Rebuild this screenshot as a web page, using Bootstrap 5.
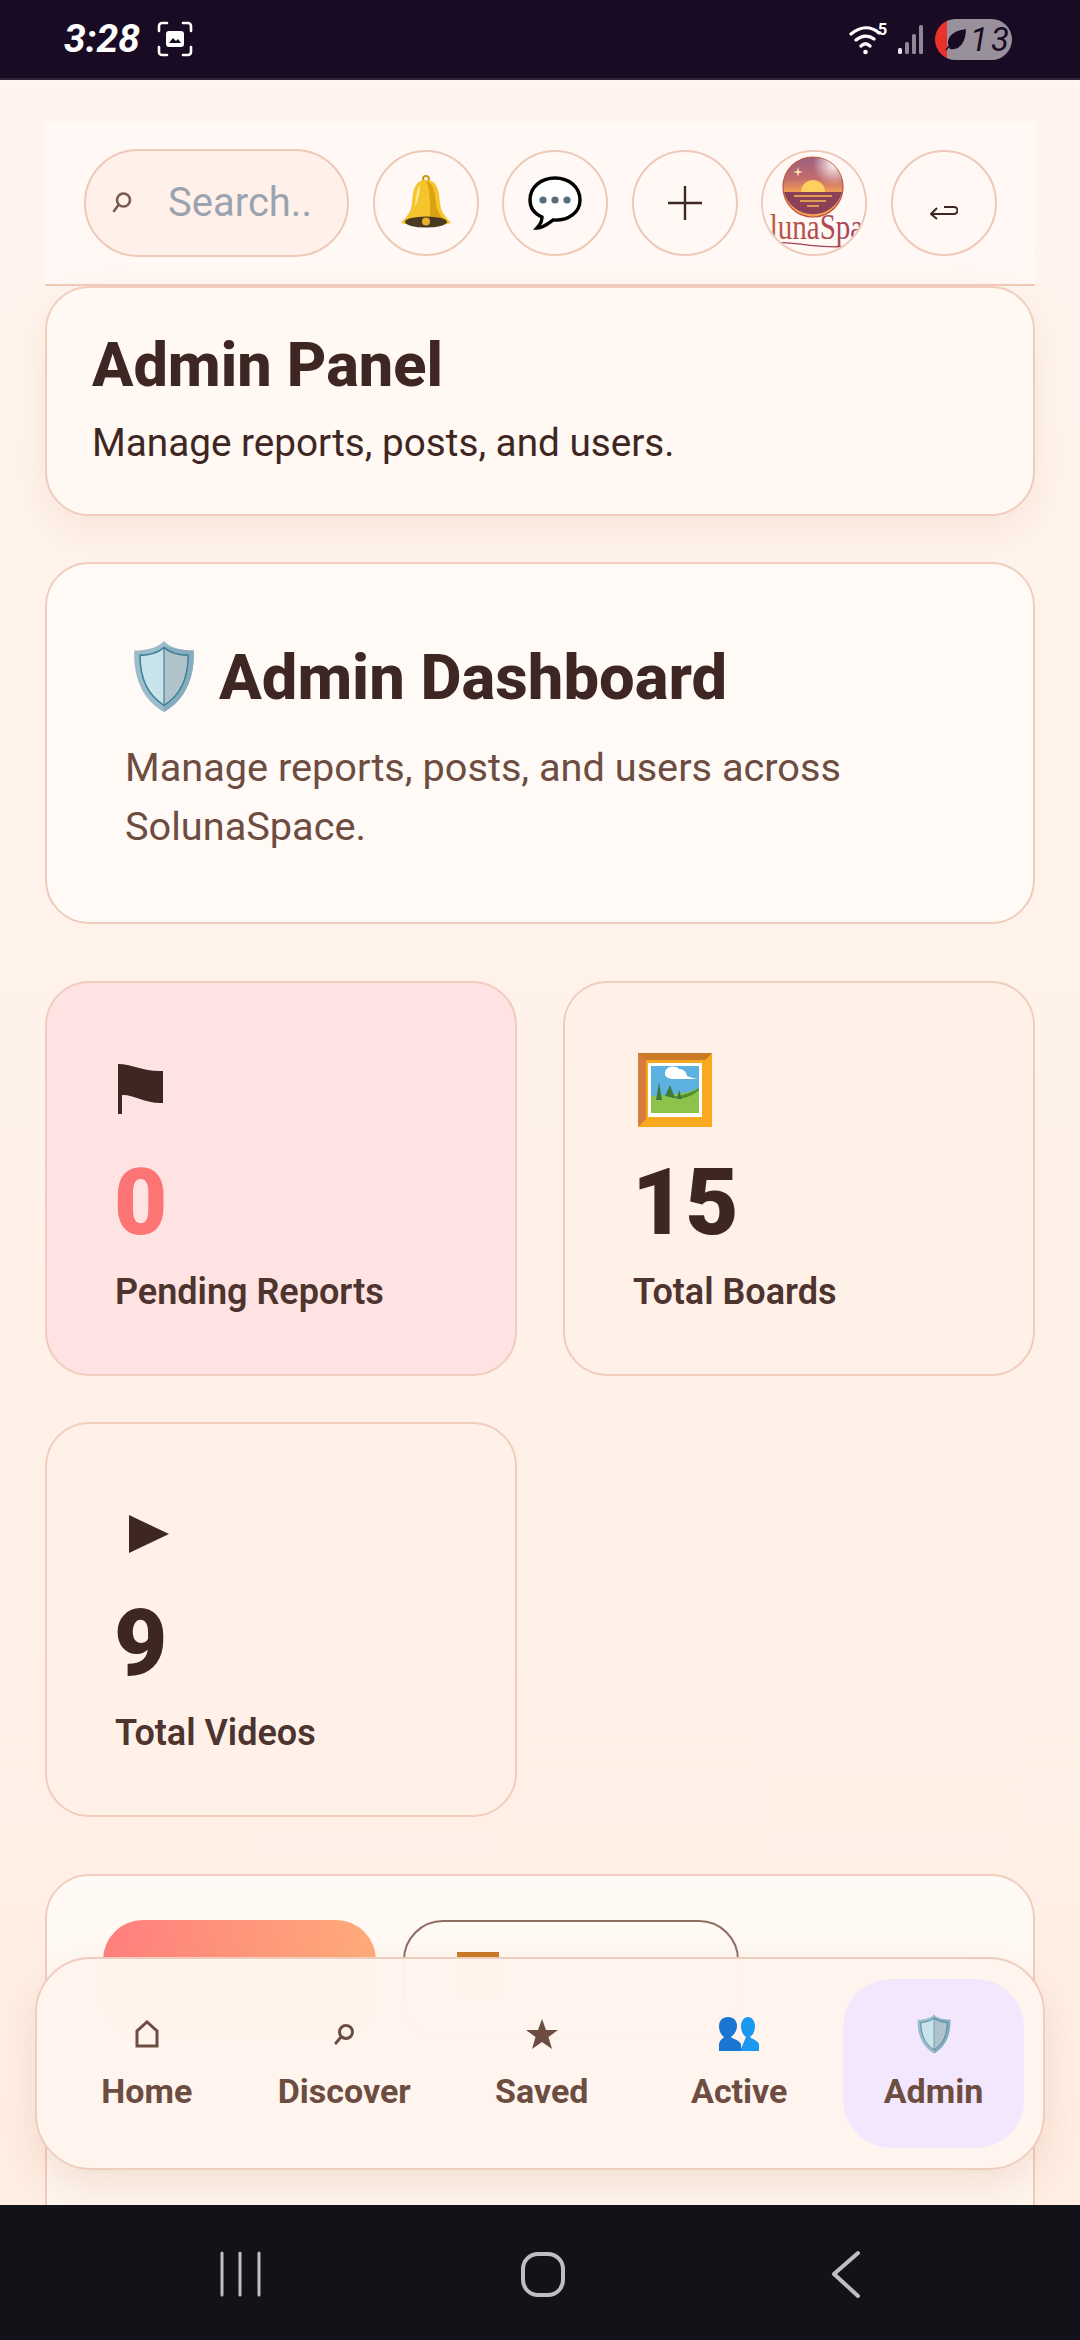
<!doctype html>
<html lang="en">
<head>
<meta charset="utf-8">
<title>Admin Panel</title>
<link href="https://cdn.jsdelivr.net/npm/bootstrap@5.3.0/dist/css/bootstrap.min.css" rel="stylesheet">
<style>
html,body{height:100%;margin:0;overflow:hidden}
body{font-family:Roboto,"Liberation Sans",sans-serif;color:#3e2723;background:#fff1e8}
.phone{width:1080px;height:2340px;overflow:hidden}
.sysbar{height:80px;flex:none;background:#1a0b24;border-bottom:2px solid #2e2536;color:#fff;padding:0 68px 0 64px}
.clock{font-family:Roboto,sans-serif;font-weight:700;font-style:italic;font-size:39px;line-height:1;width:74px}
.clock-wrap{gap:19px}
.batt{width:77px;height:41px;border-radius:21px;background:linear-gradient(90deg,#e8322a 0 12px,#98919b 12px);color:#1a0b24;font-family:Roboto,sans-serif;font-size:33px;font-style:italic;letter-spacing:3px;line-height:41px;padding-left:35px;position:relative;white-space:nowrap}
.batt svg{position:absolute;left:8px;top:9px}
.screen{flex:1 1 auto;min-height:0;position:relative;overflow:hidden;background:linear-gradient(180deg,#fff5ee,#ffeee4);padding:42px 45px 0}
.topper{height:164px;flex:none;background:#fff8f4;border-bottom:2px solid #f2cbb9;padding:27px 26px 0 39px;gap:23.5px}
.finder{width:265px;height:108px;flex:none;border:2px solid #edc9b8;border-radius:54px;background:#fff1ea;padding-left:26px;gap:36px;color:#9ca3af;font-size:40px}
.circ{width:106px;height:106px;flex:none;border:2px solid #edc9b8;border-radius:50%;background:#fff8f4;margin-top:1px;overflow:hidden}
.pane{border:2px solid #f0cdbc;border-radius:44px;background:#fff8f3}
.pane-a{height:230px;padding:42px 45px 0;box-shadow:0 14px 40px rgba(200,120,80,.12);margin-bottom:46px}
.pane-b{height:362px;padding:76px 78px 0;background:#fffaf5;margin-bottom:57px}
.head-a{font-size:61.2px;font-weight:800;line-height:70px;margin:0 0 16px;color:#3e2723}
.sub-a{font-size:38.7px;line-height:54px;margin:0;color:#3e2723}
.head-b{font-size:63.3px;font-weight:800;line-height:70px;margin:0 0 25px;color:#3e2723;gap:24px}
.shield-big{margin-left:8px}
.sub-b{font-size:39.7px;line-height:59px;margin:0;color:#6d4c41}
.tiles{display:grid;grid-template-columns:472px 472px;grid-template-rows:395px 395px;gap:46px}
.tile{border:2px solid #f0cdbc;border-radius:44px;background:#fff1e8;padding:0 0 0 68px;position:relative}
.tile-hot{background:#ffe2e2}
.tile-ico{height:100px;margin-top:68px}
.figure{font-size:92px;font-weight:900;line-height:100px;color:#3e2723;margin:2px 0 0;margin-left:-1px}
.figure-hot{color:#fc7474}
.cap{font-size:36px;font-weight:600;line-height:50px;color:#4e342e;margin-top:14px}
.flag-ico{margin:13px 0 0 3px}
.frame-ico{margin:1px 0 0 4px}
.play-ico{margin:22px 0 0 13px}
.pane-c{height:600px;margin-top:57px;padding:44px 56px;background:linear-gradient(180deg,#fffaf5,#fff4ec);gap:27px}
.cta{width:273px;height:120px;border-radius:40px;background:linear-gradient(110deg,#ff7e7e,#ffb27a);flex:none}
.cta-o{width:336px;height:120px;border-radius:40px;border:2px solid #8d6e63;flex:none;padding:30px 0 0 52px}
.dock{position:absolute;left:35px;top:1877px;width:1010px;height:213px;border:2px solid #efcdbc;border-radius:56px;background:rgba(255,245,238,.985);box-shadow:0 16px 40px rgba(190,110,70,.18);padding:20px 20px 20px 11px}
.tab{width:197.5px;flex:none;color:#6d4c41;border-radius:48px;font-size:34px;font-weight:700;line-height:40px;padding-top:18px}
.tab-on{background:#f3e7fd;width:181px;margin-left:5px}
.tab-ico{height:74px}
.syskeys{height:135px;flex:none;background:#121318}
</style>
</head>
<body>
<svg width="0" height="0" class="d-none">
<defs>
<symbol id="shield" viewBox="0 0 64 76">
<path d="M32 1C38 8 50 11 63 11C64 38 55 62 32 75C9 62 0 38 1 11C14 11 26 8 32 1Z" fill="#9dbccb"/>
<path d="M32 6V75C55 62 64 38 63 11C50 11 38 8 32 6Z" fill="#86acc0"/>
<path d="M32 8C38 13 48 16 57 16C57 38 50 57 32 68C14 57 7 38 7 16C16 16 26 13 32 8Z" fill="#c8e3e9" stroke="#3f8197" stroke-width="1.6"/>
<path d="M32 8C38 13 48 16 57 16C57 38 50 57 32 68Z" fill="#b0c2ca" stroke="#3f8197" stroke-width="1.2"/>
</symbol>
</defs>
</svg>
<div class="phone d-flex flex-column">
  <div class="sysbar d-flex align-items-center justify-content-between">
    <div class="clock-wrap d-flex align-items-center">
      <span class="clock">3:28</span>
      <svg width="36" height="36" viewBox="0 0 36 36" fill="none" stroke="#fff" stroke-width="2.6" stroke-linecap="round"><path d="M2 10V5a3 3 0 0 1 3-3h5M26 2h5a3 3 0 0 1 3 3v5M34 26v5a3 3 0 0 1-3 3h-5M10 34H5a3 3 0 0 1-3-3v-5"/><rect x="9" y="10" width="18" height="16" rx="3" fill="#fff" stroke="none"/><path d="M12 22l4-5 3 3 2-2 3 4z" fill="#1a0b24" stroke="none"/></svg>
    </div>
    <div class="d-flex align-items-center">
      <svg width="40" height="36" viewBox="0 0 40 36" fill="none" stroke="#fff" stroke-width="3.2" stroke-linecap="round"><path d="M2 13C12 5 22 5 30 12M7 19C13 14 20 14 25 18M12 25C15 22 18 22 21 25"/><circle cx="16.5" cy="31" r="2.3" fill="#fff" stroke="none"/><text x="29" y="14" fill="#fff" stroke="none" font-size="16" font-weight="700" font-family="Roboto,sans-serif">5</text></svg>
      <svg class="ms-2" width="30" height="30" viewBox="0 0 30 30"><rect x="1" y="24" width="4" height="6" rx="1.500" fill="#e8e4ea"/><rect x="8" y="18" width="4" height="12" rx="1.500" fill="#8f8794"/><rect x="15" y="10" width="4" height="20" rx="1.500" fill="#8f8794"/><rect x="22" y="1" width="4" height="29" rx="1.500" fill="#8f8794"/></svg>
      <div class="batt ms-2">13<svg width="24" height="24" viewBox="0 0 26 26"><path d="M3 24C6 20 7 19 9 17M8 22C3 14 8 4 24 2C24 14 18 24 8 22Z" fill="#1a0b24" stroke="#1a0b24" stroke-width="1.500"/></svg></div>
    </div>
  </div>

  <div class="screen">
    <div class="topper d-flex">
      <div class="finder d-flex align-items-center">
        <svg width="20" height="24" viewBox="0 0 20 24" fill="none" stroke="#7d5a4e" stroke-width="2.6" stroke-linecap="round"><circle cx="11.5" cy="9" r="6.5"/><path d="M6.500 14L2 20"/></svg>
        <span class="text-nowrap">Search..</span>
      </div>
      <div class="circ d-flex align-items-center justify-content-center">
        <svg width="52" height="56" viewBox="0 0 52 56"><circle cx="26" cy="4" r="3" fill="none" stroke="#c49a1f" stroke-width="2"/><path d="M26 5C14 5 13 17 12 28C11 38 6 42 1 48C10 51 42 51 51 48C46 42 41 38 40 28C39 17 38 5 26 5Z" fill="#f6c52e"/><path d="M26 6C33 7 35 17 36 28C37 38 42 43 48 48L30 50C30 34 31 16 26 6Z" fill="#dea112"/><path d="M20 10C16 14 16 24 15 32C18 26 20 18 20 10Z" fill="#fde88a"/><ellipse cx="26" cy="47" rx="21" ry="5.500" fill="#4a3a22"/><circle cx="26" cy="46.500" r="4" fill="#e8b02a"/></svg>
      </div>
      <div class="circ d-flex align-items-center justify-content-center">
        <svg width="54" height="54" viewBox="0 0 54 54"><path d="M27 2C13 2 2 11 2 24C2 32 7 38 14 41C14 46 11 50 9 52C15 52 21 47 25 44C41 45 52 36 52 24C52 11 41 2 27 2Z" fill="#fff" stroke="#000" stroke-width="3.4"/><circle cx="15" cy="24" r="3.600" fill="#546e7a"/><circle cx="27" cy="24" r="3.600" fill="#546e7a"/><circle cx="39" cy="24" r="3.600" fill="#546e7a"/></svg>
      </div>
      <div class="circ d-flex align-items-center justify-content-center">
        <svg width="34" height="34" viewBox="0 0 34 34" stroke="#3e2723" stroke-width="2.4"><path d="M0 17H34M17 0V34"/></svg>
      </div>
      <div class="circ">
        <svg width="102" height="102" viewBox="0 0 102 102">
          <defs>
            <linearGradient id="sky" x1="0" y1="0" x2="0" y2="1"><stop offset="0" stop-color="#9a5f80"/><stop offset=".35" stop-color="#c06c6c"/><stop offset=".6" stop-color="#f5a055"/></linearGradient>
            <linearGradient id="ink" x1="0" y1="0" x2="1" y2="0"><stop offset="0" stop-color="#c5603f"/><stop offset="1" stop-color="#9b3a62"/></linearGradient>
            <radialGradient id="fade" cx=".85" cy=".12" r=".35"><stop offset="0" stop-color="#fff8f4"/><stop offset="1" stop-color="#fff8f4" stop-opacity="0"/></radialGradient>
          </defs>
          <rect width="102" height="102" fill="#fff8f4"/>
          <circle cx="50" cy="35" r="30" fill="url(#sky)" stroke="#c0503f" stroke-width="1.2"/>
          <path d="M38 40A12 12 0 0 1 62 40Z" fill="#ffd05f"/>
          <path d="M21 40H79A30 30 0 0 1 21 40Z" fill="#8a4158"/>
          <path d="M31 44H69M37 49H63M44 54H56" stroke="#ffb85a" stroke-width="1.500"/>
          <circle cx="50" cy="35" r="30" fill="url(#fade)"/>
          <path d="M35 15l1 4 4 1-4 1-1 4-1-4-4-1 4-1z" fill="#ffe3b0"/>
          <text x="51" y="87" text-anchor="middle" font-family="Liberation Serif,serif" font-size="36" fill="url(#ink)" textLength="150" lengthAdjust="spacingAndGlyphs">SolunaSpace</text>
          <path d="M12 91C30 88 50 98 92 94" fill="none" stroke="#a63e55" stroke-width="1.200"/>
        </svg>
      </div>
      <div class="circ d-flex align-items-center justify-content-center">
        <svg width="28" height="18" viewBox="0 0 28 18" fill="none" stroke="#3e2723" stroke-width="2" class="mt-3"><path d="M1 12H24A3.500 3.500 0 0 0 24 5H14"/><path d="M7 6L1 12L7 17"/></svg>
      </div>
    </div>

    <section class="pane pane-a">
      <h1 class="head-a">Admin Panel</h1>
      <p class="sub-a">Manage reports, posts, and users.</p>
    </section>

    <section class="pane pane-b">
      <h2 class="head-b d-flex align-items-center"><svg class="shield-big" width="62" height="73"><use href="#shield"/></svg><span>Admin Dashboard</span></h2>
      <p class="sub-b">Manage reports, posts, and users across SolunaSpace.</p>
    </section>

    <div class="tiles">
      <div class="tile tile-hot">
        <div class="tile-ico"><svg class="flag-ico" width="46" height="50" viewBox="0 0 46 50"><path d="M0 0C14 0 26 8 45 7V39C28 40 14 30 4 31V50H0Z" fill="#3e2723"/></svg></div>
        <div class="figure figure-hot">0</div>
        <div class="cap">Pending Reports</div>
      </div>
      <div class="tile">
        <div class="tile-ico">
          <svg class="frame-ico" width="76" height="76" viewBox="0 0 76 76">
            <rect width="74" height="74" x="1" y="1" fill="#f8a91f"/>
            <path d="M1 1H75L68 8H9V67L1 75Z" fill="#d97b3d"/>
            <path d="M1 1H75L68 8H9Z" fill="#ca7a26"/>
            <rect x="11" y="11" width="54" height="54" fill="#fff"/>
            <rect x="14" y="14" width="48" height="47" fill="#5cb1e0"/>
            <path d="M14 44C28 42 46 44 62 36V61H14Z" fill="#8dc34a"/>
            <path d="M30 44C40 46 52 42 62 36V38C50 48 40 48 30 44Z" fill="#4f8e2c"/>
            <path d="M19 48L22 30L25 48ZM28 44L33 33L38 46ZM40 47L42 38L45 47Z" fill="#3e7a3a"/>
            <path d="M28 20C30 14 38 13 42 17C48 17 50 22 50 24C54 25 58 27 62 27L36 27C32 27 27 25 28 20Z" fill="#fff"/>
          </svg>
        </div>
        <div class="figure">15</div>
        <div class="cap">Total Boards</div>
      </div>
      <div class="tile">
        <div class="tile-ico"><svg class="play-ico" width="42" height="40" viewBox="0 0 42 40"><path d="M1 1L41 20L1 39Z" fill="#3e2723"/></svg></div>
        <div class="figure">9</div>
        <div class="cap">Total Videos</div>
      </div>
    </div>

    <section class="pane pane-c d-flex align-items-start">
      <div class="cta"></div>
      <div class="cta-o"><svg width="42" height="42" viewBox="0 0 42 42"><rect width="42" height="42" fill="#f8a91f"/><rect y="0" width="42" height="5" fill="#ca7a26"/></svg></div>
    </section>

    <nav class="dock d-flex">
      <div class="tab text-center"><div class="tab-ico d-flex align-items-center justify-content-center"><svg width="24" height="28" viewBox="0 0 24 28" fill="none" stroke="#6d4c41" stroke-width="3"><path d="M2 26V11L12 2L22 11V26Z"/></svg></div><div>Home</div></div>
      <div class="tab text-center"><div class="tab-ico d-flex align-items-center justify-content-center"><svg width="20" height="22" viewBox="0 0 20 22" fill="none" stroke="#6d4c41" stroke-width="3"><circle cx="12" cy="9" r="6.500"/><path d="M7 14L2 20" stroke-linecap="round"/></svg></div><div>Discover</div></div>
      <div class="tab text-center"><div class="tab-ico d-flex align-items-center justify-content-center"><svg width="32" height="30" viewBox="0 0 32 30"><path d="M16 0L20 11H32L22.500 18L26 30L16 23L6 30L9.500 18L0 11H12Z" fill="#6d4c41"/></svg></div><div>Saved</div></div>
      <div class="tab text-center"><div class="tab-ico d-flex align-items-center justify-content-center"><svg width="40" height="34" viewBox="0 0 40 34"><path d="M21 34H40V27C38 23 33 22 31 20C35 17 36 13 36 9C36 4 33 0 29 0C25 0 22 4 22 9C22 13 23 17 27 20Z" fill="#1b98f0"/><path d="M0 34H22V27C20 23 14 22 12 20C16 17 18 13 18 9C18 4 15 0 9 0C3 0 0 4 0 9C0 13 1 17 5 20C3 22 1 23 0 27Z" fill="#1a76d2"/></svg></div><div>Active</div></div>
      <div class="tab tab-on text-center"><div class="tab-ico d-flex align-items-center justify-content-center"><svg width="34" height="40"><use href="#shield"/></svg></div><div>Admin</div></div>
    </nav>
  </div>

  <div class="syskeys">
    <svg class="d-block" width="1080" height="135" viewBox="0 0 1080 135" fill="none" stroke="#bdbfc2">
      <path d="M222 48V90M240 48V90M259 48V90" stroke-width="3" stroke-linecap="round"/>
      <rect x="523" y="49" width="40" height="41" rx="15" stroke-width="4"/>
      <path d="M858 48L834 69L858 91" stroke-width="4" stroke-linecap="round" stroke-linejoin="round"/>
    </svg>
  </div>
</div>
<script src="https://cdn.jsdelivr.net/npm/bootstrap@5.3.0/dist/js/bootstrap.bundle.min.js"></script>
</body>
</html>
